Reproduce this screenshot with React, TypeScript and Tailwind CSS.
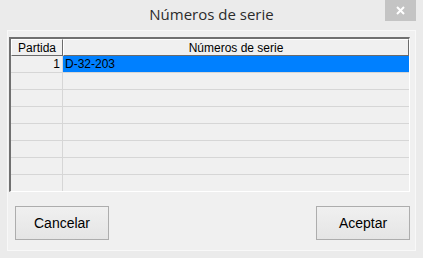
import React from 'react';

const ROWS = [
  { partida: '1', serie: 'D-32-203' },
  { partida: '', serie: '' },
  { partida: '', serie: '' },
  { partida: '', serie: '' },
  { partida: '', serie: '' },
  { partida: '', serie: '' },
  { partida: '', serie: '' },
  { partida: '', serie: '' },
];

export default function App() {
  return (
    <div
      className="w-[423px] h-[258px] bg-[#ebebeb] flex flex-col overflow-hidden"
      style={{ fontFamily: '"Liberation Sans", Arial, sans-serif' }}
    >
      {/* Title bar */}
      <div className="relative h-[30px] shrink-0 flex items-center justify-center">
        <span
          className="text-[15px] text-[#2b2b2b] pb-[1px]"
          style={{ fontFamily: '"Open Sans", "Noto Sans", sans-serif' }}
        >
          Números de serie
        </span>
        <div className="absolute top-0 right-[7px] w-[31px] h-[21px] bg-[#c4c4c4] flex items-center justify-center">
          <svg width="9" height="9" viewBox="0 0 9 9">
            <path d="M1 1 L8 8 M8 1 L1 8" stroke="#ffffff" strokeWidth="2" />
          </svg>
        </div>
      </div>

      {/* Panel */}
      <div className="mx-[7px] h-[221px] border border-[#f8f8f8] bg-[#f0f0f0] flex flex-col pl-[1px] pr-[5px] pt-[6px]">
        {/* Grid */}
        <div className="h-[155px] border-t-2 border-l-2 border-[#707070] border-r border-b border-r-white border-b-white flex flex-col text-[12px] text-black overflow-hidden">
          {/* Header */}
          <div className="flex h-[17px] shrink-0">
            <div className="w-[52px] border-t border-l border-white border-r border-b border-r-[#6b6b6b] border-b-[#6b6b6b] bg-[#f0f0f0] flex items-center justify-center leading-none">
              Partida
            </div>
            <div className="flex-1 border-t border-l border-white border-r border-b border-r-[#6b6b6b] border-b-[#6b6b6b] bg-[#f0f0f0] flex items-center justify-center leading-none">
              Números de serie
            </div>
          </div>
          {/* Rows */}
          {ROWS.map((r, i) => (
            <div key={i} className="flex h-[17px] shrink-0">
              <div className="w-[52px] border-r border-b border-[#d6d6d6] flex items-center justify-end pr-[2px] leading-none">
                {r.partida}
              </div>
              <div
                className={`flex-1 border-b border-[#d6d6d6] flex items-center pl-[2px] leading-none ${
                  i === 0 ? 'bg-[#0080ff]' : ''
                }`}
              >
                {r.serie}
              </div>
            </div>
          ))}
        </div>

        {/* Buttons */}
        <div className="flex justify-between mt-[14px] pl-[6px]">
          <button className="w-[94px] h-[34px] border border-[#adadad] bg-gradient-to-b from-[#f0f0f0] to-[#e5e5e5] text-[14px] text-black">
            Cancelar
          </button>
          <button className="w-[94px] h-[34px] border border-[#adadad] bg-gradient-to-b from-[#f0f0f0] to-[#e5e5e5] text-[14px] text-black">
            Aceptar
          </button>
        </div>
      </div>
    </div>
  );
}
